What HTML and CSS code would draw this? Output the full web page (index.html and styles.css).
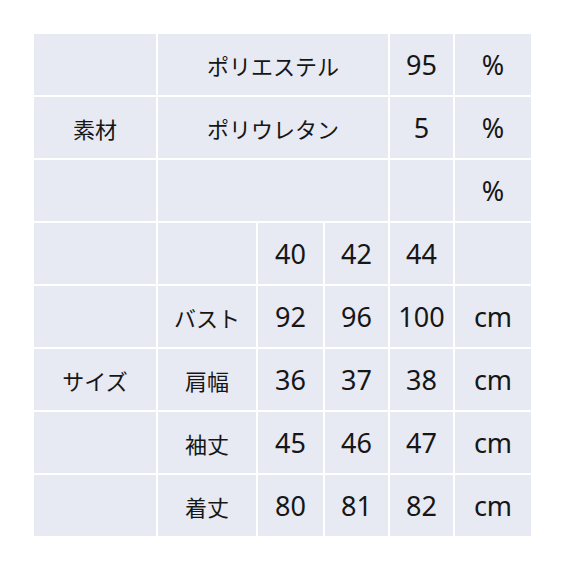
FILE: index.html
```html
<!DOCTYPE html>
<html lang="ja">
<head>
<meta charset="utf-8">
<link rel="stylesheet" href="styles.css">
</head>
<body>
<div class="table">
  <div class="cell"></div>
  <div class="cell jp span3">ポリエステル</div>
  <div class="cell">95</div>
  <div class="cell">%</div>

  <div class="cell jp">素材</div>
  <div class="cell jp span3">ポリウレタン</div>
  <div class="cell">5</div>
  <div class="cell">%</div>

  <div class="cell"></div>
  <div class="cell span3"></div>
  <div class="cell"></div>
  <div class="cell">%</div>

  <div class="cell"></div>
  <div class="cell"></div>
  <div class="cell">40</div>
  <div class="cell">42</div>
  <div class="cell">44</div>
  <div class="cell"></div>

  <div class="cell"></div>
  <div class="cell jp">バスト</div>
  <div class="cell">92</div>
  <div class="cell">96</div>
  <div class="cell">100</div>
  <div class="cell">cm</div>

  <div class="cell jp">サイズ</div>
  <div class="cell jp">肩幅</div>
  <div class="cell">36</div>
  <div class="cell">37</div>
  <div class="cell">38</div>
  <div class="cell">cm</div>

  <div class="cell"></div>
  <div class="cell jp">袖丈</div>
  <div class="cell">45</div>
  <div class="cell">46</div>
  <div class="cell">47</div>
  <div class="cell">cm</div>

  <div class="cell"></div>
  <div class="cell jp">着丈</div>
  <div class="cell">80</div>
  <div class="cell">81</div>
  <div class="cell">82</div>
  <div class="cell">cm</div>
</div>
</body>
</html>
```

FILE: styles.css
```css
html, body {
  margin: 0;
  padding: 0;
  background: #ffffff;
}
body {
  padding: 34px 0 0 34px;
  font-family: "Noto Sans", "Noto Sans CJK JP", sans-serif;
  color: #161616;
}
.table {
  display: grid;
  grid-template-columns: 122px 98px 65px 63px 63px 76px;
  grid-auto-rows: 61px;
  gap: 2px;
  background: #ffffff;
  width: 497px;
}
.cell {
  background: #e7e9f3;
  display: flex;
  align-items: center;
  justify-content: center;
  font-size: 27px;
  line-height: 1;
}
.jp {
  font-family: "Noto Sans CJK JP", sans-serif;
  font-size: 22px;
}
.span3 {
  grid-column: span 3;
}
```
